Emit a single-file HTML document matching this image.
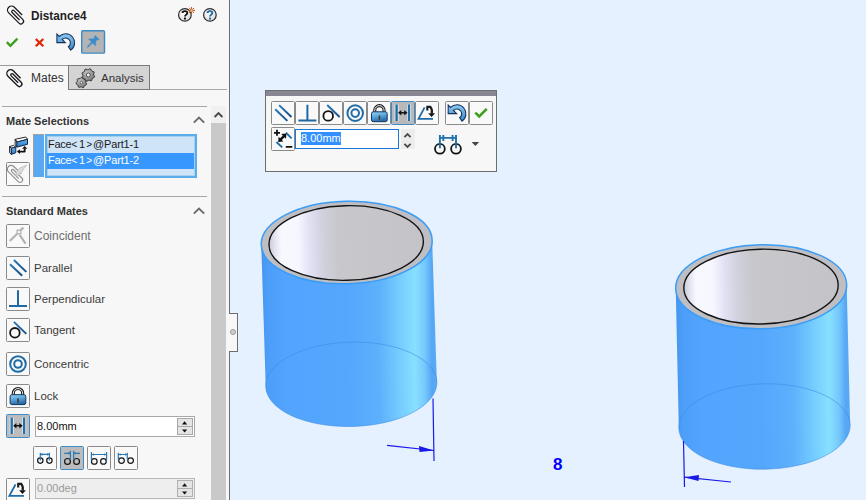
<!DOCTYPE html>
<html><head><meta charset="utf-8">
<style>
*{margin:0;padding:0;box-sizing:border-box}
html,body{width:866px;height:500px;overflow:hidden;background:#e5f1fe;font-family:"Liberation Sans",sans-serif}
.a{position:absolute}
#panel{position:absolute;left:0;top:0;width:229px;height:500px;background:#f7f7f7}
#pborder{position:absolute;left:229px;top:0;width:1px;height:500px;background:#6e6e6e}
.t{position:absolute;white-space:nowrap;font-size:12px;color:#3b3b3b;line-height:14px}
.hdr{font-weight:bold;font-size:11px;color:#333}
.btn{position:absolute;width:24px;height:24px;border:1px solid #8a8a8a;border-radius:1.5px;background:#f9f9f9}
.hr{position:absolute;height:1px;background:#a8a8a8}
svg{position:absolute;overflow:visible}
</style></head><body>

<!-- viewport scene -->
<svg class="a" style="left:0;top:0" width="866" height="500" viewBox="0 0 866 500">
<defs>
  <linearGradient id="body1" gradientUnits="userSpaceOnUse" x1="261.2" y1="0" x2="436.4" y2="0">
    <stop offset="0" stop-color="#4696ee"/>
    <stop offset="0.04" stop-color="#4c9ef8"/>
    <stop offset="0.15" stop-color="#52a4fd"/>
    <stop offset="0.5" stop-color="#54a7fd"/>
    <stop offset="0.67" stop-color="#5cb0fc"/>
    <stop offset="0.8" stop-color="#76cffe"/>
    <stop offset="0.88" stop-color="#88e0ff"/>
    <stop offset="0.935" stop-color="#74c8fc"/>
    <stop offset="0.975" stop-color="#55a6f5"/>
    <stop offset="1" stop-color="#5aaaf4"/>
  </linearGradient>
  <linearGradient id="body2" gradientUnits="userSpaceOnUse" x1="675.7" y1="0" x2="850.3" y2="0">
    <stop offset="0" stop-color="#4696ee"/>
    <stop offset="0.04" stop-color="#4c9ef8"/>
    <stop offset="0.15" stop-color="#52a4fd"/>
    <stop offset="0.5" stop-color="#54a7fd"/>
    <stop offset="0.67" stop-color="#5cb0fc"/>
    <stop offset="0.8" stop-color="#76cffe"/>
    <stop offset="0.88" stop-color="#88e0ff"/>
    <stop offset="0.935" stop-color="#74c8fc"/>
    <stop offset="0.975" stop-color="#55a6f5"/>
    <stop offset="1" stop-color="#5aaaf4"/>
  </linearGradient>
  <linearGradient id="inner1" gradientUnits="userSpaceOnUse" x1="269" y1="0" x2="423.4" y2="0">
    <stop offset="0" stop-color="#c8c8d6"/>
    <stop offset="0.04" stop-color="#e4e4f2"/>
    <stop offset="0.08" stop-color="#f8f8ff"/>
    <stop offset="0.19" stop-color="#f6f6ff"/>
    <stop offset="0.26" stop-color="#e2e2f6"/>
    <stop offset="0.34" stop-color="#d2d2e0"/>
    <stop offset="0.44" stop-color="#c8c8cc"/>
    <stop offset="1" stop-color="#c4c4c8"/>
  </linearGradient>
  <linearGradient id="inner2" gradientUnits="userSpaceOnUse" x1="683.8" y1="0" x2="838.2" y2="0">
    <stop offset="0" stop-color="#c8c8d6"/>
    <stop offset="0.04" stop-color="#e4e4f2"/>
    <stop offset="0.08" stop-color="#f8f8ff"/>
    <stop offset="0.19" stop-color="#f6f6ff"/>
    <stop offset="0.26" stop-color="#e2e2f6"/>
    <stop offset="0.34" stop-color="#d2d2e0"/>
    <stop offset="0.44" stop-color="#c8c8cc"/>
    <stop offset="1" stop-color="#c4c4c8"/>
  </linearGradient>
</defs>
<!-- cylinder 1 -->
<path d="M261.22,244.12 L265.72,385.92 L436.88,382.68 L432.18,240.88 Z" fill="url(#body1)"/>
<ellipse cx="351.30" cy="384.30" rx="85.60" ry="42.20" transform="rotate(-1.432 351.30 384.30)" fill="url(#body1)"/>
<ellipse cx="351.30" cy="384.30" rx="85.60" ry="42.20" transform="rotate(-1.432 351.30 384.30)" fill="none" stroke="#3a8ae4" stroke-width="0.8" opacity="0.7"/>
<ellipse cx="346.70" cy="242.50" rx="85.50" ry="41.30" transform="rotate(-1.427 346.70 242.50)" fill="#bfbfc3" stroke="#3a9cf6" stroke-width="1.5"/>
<ellipse cx="346.20" cy="243.00" rx="77.20" ry="37.30" transform="rotate(-1.427 346.20 243.00)" fill="url(#inner1)" stroke="#141414" stroke-width="1.4"/>
<!-- cylinder 2 -->
<path d="M675.72,288.14 L678.81,427.67 L850.19,425.33 L846.68,285.26 Z" fill="url(#body2)"/>
<ellipse cx="764.50" cy="426.50" rx="85.70" ry="42.70" transform="rotate(-1.031 764.50 426.50)" fill="url(#body2)"/>
<ellipse cx="764.50" cy="426.50" rx="85.70" ry="42.70" transform="rotate(-1.031 764.50 426.50)" fill="none" stroke="#3a8ae4" stroke-width="0.8" opacity="0.7"/>
<ellipse cx="761.20" cy="286.70" rx="85.50" ry="42.00" transform="rotate(-1.261 761.20 286.70)" fill="#bfbfc3" stroke="#3a9cf6" stroke-width="1.5"/>
<ellipse cx="761.00" cy="286.60" rx="77.20" ry="37.40" transform="rotate(-1.261 761.00 286.60)" fill="url(#inner2)" stroke="#141414" stroke-width="1.4"/>
<!-- dimensions -->
<g stroke="#1a1ae8" stroke-width="1.2" fill="#1a1ae8">
  <line x1="433" y1="398.5" x2="434" y2="461"/>
  <line x1="387" y1="445.3" x2="434" y2="450.5"/>
  <path d="M434,450.5 L419,446 L419.5,452 Z" stroke="none"/>
  <line x1="683.5" y1="441" x2="684.5" y2="487"/>
  <line x1="684" y1="477.2" x2="731" y2="482"/>
  <path d="M684,477.2 L699,475 L698.5,481 Z" stroke="none"/>
</g>
<text x="553" y="470" font-family="Liberation Sans" font-weight="bold" font-size="17" fill="#0000ff">8</text>
</svg>
<div id="panel">
  <!-- title -->
  <svg class="a" style="left:0;top:0" width="230" height="100" viewBox="0 0 230 100">
  <defs>
    <linearGradient id="undog" x1="0" y1="0" x2="0" y2="1">
      <stop offset="0" stop-color="#8ccaf4"/><stop offset="1" stop-color="#3c86c6"/>
    </linearGradient>
    <radialGradient id="helpg" cx="0.4" cy="0.35" r="0.7">
      <stop offset="0" stop-color="#ffffff"/><stop offset="1" stop-color="#d8d8d8"/>
    </radialGradient>
  </defs>
  <g transform="translate(16.2,14.7) rotate(-45) translate(0,-6.6)" fill="none" stroke="#1a1a1a" stroke-width="1.25">
    <path d="M4,11 L4,0 A4,4 0 0 0 -4,0 L-4,14.5 A2.675,2.675 0 0 0 1.35,14.5 L1.35,2.2 A1.35,1.35 0 0 0 -1.35,2.2 L-1.35,12.7"/>
  </g>
  <path id="ic-chk" d="M6.8,42.2 L10.4,45.8 L17.4,38.7" fill="none" stroke="#3ca01e" stroke-width="2.4"/>
  <path d="M35.8,39 L43.3,46.3 M43.3,39 L35.8,46.3" fill="none" stroke="#e02800" stroke-width="2.3"/>
  <path id="ic-undo" d="M56.9,34 L56.9,42.6 L65.3,42.6 L62.2,39.4 A4.8,4.8 0 1 1 68.35,46.73 L70.76,50.17 A9,9 0 1 0 59.24,36.44 Z" fill="url(#undog)" stroke="#14345e" stroke-width="1.1"/>
  <rect x="81.7" y="30.7" width="22.8" height="22.4" rx="1.2" fill="#b4b4b4" stroke="#3a8ac4" stroke-width="1.4"/>
  <path d="M95.22,35.42 L99.18,39.38 L98.19,40.37 L97.41,39.59 L95.86,41.15 L95.64,46.03 L92.67,43.06 L87.80,47.51 L87.09,46.80 L91.54,41.93 L88.57,38.96 L93.45,38.74 L95.01,37.19 L94.23,36.41 Z" fill="#3a8cc8" stroke="#3a8cc8" stroke-width="0.4" stroke-linejoin="round"/>
  <circle cx="184.9" cy="14.9" r="6.3" fill="url(#helpg)" stroke="#2e2e2e" stroke-width="1.2"/>
  <path d="M182.5,13 C182.5,11.6 183.5,11.1 184.9,11.1 C186.3,11.1 187.3,11.9 187.3,13 C187.3,14.5 185,14.8 185,16.6" fill="none" stroke="#111" stroke-width="1.8"/>
  <rect x="184" y="17.6" width="2" height="1.9" fill="#111"/>
  <g stroke="#b04a22" stroke-width="1"><path d="M191.6,7 V13.8 M188.2,10.4 H195 M189.2,8 L194,12.8 M194,8 L189.2,12.8"/></g>
  <circle cx="191.6" cy="10.4" r="1.5" fill="#f2a858"/>
  <circle cx="209.9" cy="14.9" r="6.3" fill="url(#helpg)" stroke="#2e2e2e" stroke-width="1.2"/>
  <path d="M207.5,13 C207.5,11.6 208.5,11.1 209.9,11.1 C211.3,11.1 212.3,11.9 212.3,13 C212.3,14.5 210,14.8 210,16.6" fill="none" stroke="#1e6aa6" stroke-width="1.8"/>
  <rect x="209" y="17.6" width="2" height="1.9" fill="#1e6aa6"/>
</svg>
  <div class="t" style="left:31px;top:9px;font-weight:bold;font-size:12.5px;color:#1e1e1e;transform:scaleX(0.94);transform-origin:0 0">Distance4</div>

  <!-- tabs -->
  <div class="a" style="left:0;top:65px;width:69px;height:25px;border-top:1px solid #9a9a9a;border-right:1px solid #7a7a7a;background:#f7f7f7"></div>
  <div class="a" style="left:68px;top:65px;width:82px;height:25px;border:1px solid #7a7a7a;background:#d4d4d4"></div>
  <div class="hr" style="left:150px;top:89px;width:77px"></div>
  <div class="t" style="left:31px;top:71px;color:#333">Mates</div>
  <div class="t" style="left:101px;top:71px;font-size:11.5px;color:#333">Analysis</div>
  <svg class="a" style="left:0;top:60px" width="160" height="34" viewBox="0 60 160 34">
    <defs><radialGradient id="gearg" cx="0.4" cy="0.35" r="0.8"><stop offset="0" stop-color="#c4c4c4"/><stop offset="1" stop-color="#6a6a6a"/></radialGradient></defs>
    <g transform="translate(15,77.9) scale(0.94) rotate(-45) translate(0,-6.6)" fill="none" stroke="#1a1a1a" stroke-width="1.45">
      <path d="M4,11 L4,0 A4,4 0 0 0 -4,0 L-4,14.5 A2.675,2.675 0 0 0 1.35,14.5 L1.35,2.2 A1.35,1.35 0 0 0 -1.35,2.2 L-1.35,12.7"/>
    </g>
    <path d="M86.59,83.65 L86.23,84.78 L84.91,85.26 L84.23,85.97 L83.82,87.32 L82.71,87.74 L81.51,87.00 L80.53,86.91 L79.22,87.43 L78.20,86.82 L78.03,85.43 L77.48,84.61 L76.26,83.91 L76.10,82.73 L77.09,81.73 L77.39,80.79 L77.18,79.40 L78.00,78.54 L79.39,78.68 L80.32,78.34 L81.27,77.30 L82.45,77.41 L83.21,78.59 L84.06,79.09 L85.46,79.20 L86.12,80.18 L85.66,81.52 L85.80,82.49 Z" fill="url(#gearg)" stroke="#2e2e2e" stroke-width="0.9"/>
    <circle cx="81.4" cy="82.6" r="1.3" fill="#f0f0f0" stroke="#333" stroke-width="0.7"/>
    <path d="M94.57,76.27 L94.20,77.47 L92.78,78.02 L92.10,78.83 L91.84,80.33 L90.73,80.92 L89.33,80.30 L88.28,80.40 L87.03,81.27 L85.83,80.90 L85.28,79.48 L84.47,78.80 L82.97,78.54 L82.38,77.43 L83.00,76.03 L82.90,74.98 L82.03,73.73 L82.40,72.53 L83.82,71.98 L84.50,71.17 L84.76,69.67 L85.87,69.08 L87.27,69.70 L88.32,69.60 L89.57,68.73 L90.77,69.10 L91.32,70.52 L92.13,71.20 L93.63,71.46 L94.22,72.57 L93.60,73.97 L93.70,75.02 Z" fill="url(#gearg)" stroke="#2e2e2e" stroke-width="0.9"/>
    <circle cx="88.3" cy="75" r="2" fill="#f0f0f0" stroke="#333" stroke-width="0.8"/>
  </svg>

  <!-- Mate selections -->
  <div class="hr" style="left:2px;top:106px;width:205px"></div>
  <div class="t hdr" style="left:6px;top:114px">Mate Selections</div>

  <div class="a" style="left:33px;top:134px;width:11px;height:43px;background:#5aa8f2;border-top:1px solid #a0a0a0;border-left:1px solid #a0a0a0"></div>
  <div class="a" style="left:45px;top:134px;width:152px;height:44px;border:2px solid #5aaee8;box-shadow:inset 0 0 0 1px #a6d0f2;background:#d0e4f8"></div>
  <div class="a" style="left:47px;top:153px;width:147px;height:16px;background:#3797fc"></div>
  <div class="t" style="left:0;top:137px;font-size:11px;color:#1a1a1a"><span class="a" style="left:48px;letter-spacing:-0.3px">Face</span><span class="a" style="left:71.4px;top:0.5px;font-size:10px">&lt;</span><span class="a" style="left:79px">1</span><span class="a" style="left:86.3px;top:0.5px;font-size:10px">&gt;</span><span class="a" style="left:93px;letter-spacing:-0.15px">@Part1-1</span></div>
  <div class="t" style="left:0;top:153px;font-size:11px;color:#fff"><span class="a" style="left:48px;letter-spacing:-0.3px">Face</span><span class="a" style="left:71.4px;top:0.5px;font-size:10px">&lt;</span><span class="a" style="left:79px">1</span><span class="a" style="left:86.3px;top:0.5px;font-size:10px">&gt;</span><span class="a" style="left:93px;letter-spacing:-0.15px">@Part1-2</span></div>

  <div class="btn" style="left:6px;top:162px"></div>
  <!-- Standard mates -->
  <div class="hr" style="left:2px;top:196px;width:205px"></div>
  <div class="t hdr" style="left:6px;top:204px">Standard Mates</div>

  <div class="btn" style="left:6px;top:224px"></div>
  <div class="t" style="left:34px;top:229px;color:#6e6e6e">Coincident</div>
  <div class="btn" style="left:6px;top:256px"></div>
  <div class="t" style="left:34px;top:261px;font-size:11.5px">Parallel</div>
  <div class="btn" style="left:6px;top:287px"></div>
  <div class="t" style="left:34px;top:292px;font-size:11.5px">Perpendicular</div>
  <div class="btn" style="left:6px;top:318px"></div>
  <div class="t" style="left:34px;top:323px;font-size:11.5px">Tangent</div>
  <div class="btn" style="left:6px;top:352px"></div>
  <div class="t" style="left:34px;top:357px;font-size:11.5px">Concentric</div>
  <div class="btn" style="left:6px;top:384px"></div>
  <div class="t" style="left:34px;top:389px;font-size:11.5px">Lock</div>
  <div class="btn" style="left:6px;top:414px;background:#bcbcbc;border:1.5px solid #3d8cc8"></div>

  <div class="a" style="left:35px;top:416px;width:160px;height:21px;border:1px solid #a8a8a8;background:#fff"></div>
  <div class="t" style="left:37px;top:419px;font-size:11px;color:#111">8.00mm</div>
  <div class="a" style="left:177px;top:418px;width:16px;height:9px;border:1px solid #a8a8a8;background:#e4e4e4"></div><div class="a" style="left:177px;top:426px;width:16px;height:9px;border:1px solid #a8a8a8;background:#e4e4e4"></div>

  <div class="btn" style="left:33px;top:446px;width:24px;height:24px"></div>
  <div class="btn" style="left:60px;top:446px;width:24px;height:24px;background:#bcbcbc;border:1.5px solid #3d8cc8"></div>
  <div class="btn" style="left:87px;top:446px;width:24px;height:24px"></div>
  <div class="btn" style="left:114px;top:446px;width:24px;height:24px"></div>

  <div class="btn" style="left:6px;top:478px"></div>
  <div class="a" style="left:35px;top:478px;width:160px;height:21px;border:1px solid #b8b8b8;background:#eeeeee"></div>
  <div class="t" style="left:37px;top:481px;font-size:11px;color:#9a9a9a">0.00deg</div>
  <div class="a" style="left:177px;top:480px;width:16px;height:9px;border:1px solid #b0b0b0;background:#e4e4e4"></div><div class="a" style="left:177px;top:488px;width:16px;height:9px;border:1px solid #b0b0b0;background:#e4e4e4"></div>

  <!-- scrollbar -->
  <div class="a" style="left:211px;top:106px;width:15px;height:17px;background:#f0f0f0"></div>
  <div class="a" style="left:211px;top:123px;width:15px;height:377px;background:#c9c9c9"></div>

  <svg class="a" style="left:0;top:120px" width="230" height="380" viewBox="0 120 230 380">
    <defs>
      <linearGradient id="blueln" x1="0" y1="0" x2="1" y2="1"><stop offset="0" stop-color="#2a7ab8"/><stop offset="1" stop-color="#1a4e86"/></linearGradient>
      <linearGradient id="lockg" x1="0" y1="0" x2="0.3" y2="1"><stop offset="0" stop-color="#9ad4f4"/><stop offset="0.5" stop-color="#5aa6dc"/><stop offset="1" stop-color="#2a6aa8"/></linearGradient>
      <linearGradient id="boxg" x1="0" y1="0" x2="0" y2="1"><stop offset="0" stop-color="#6ab6ec"/><stop offset="1" stop-color="#2a78c0"/></linearGradient>
    </defs>
    <!-- swap icon -->
    <g stroke-linejoin="round">
      <path d="M15.2,139.3 L25.8,137 L27.5,139.3 L16.9,142.1 Z" fill="#fff" stroke="#111" stroke-width="0.9"/>
      <path d="M15.2,139.3 L16.9,142.1 L16.9,147.1 L15.2,144.9 Z" fill="#fff" stroke="#111" stroke-width="0.9"/>
      <path d="M16.9,142.1 L27.5,139.3 L27.5,144.3 L16.9,147.1 Z" fill="url(#boxg)" stroke="#0d2a50" stroke-width="1"/>
      <path d="M9.6,146.6 L13.5,145.4 L15.8,147.1 L11.3,148.2 Z" fill="#fff" stroke="#111" stroke-width="0.9"/>
      <path d="M9.6,146.6 L11.3,148.2 L11.3,154.4 L9.6,152.7 Z" fill="#fff" stroke="#111" stroke-width="0.9"/>
      <path d="M11.3,148.2 L15.8,147.1 L15.8,152.7 L11.3,154.4 Z" fill="url(#boxg)" stroke="#0d2a50" stroke-width="1"/>
      <path d="M19.2,151.6 L24.7,151.6 L24.7,148.4" fill="none" stroke="#111" stroke-width="1.8"/>
      <path d="M16.9,151.6 L19.9,149.3 L19.9,154 Z M24.7,145.9 L22.1,148.8 L27.3,148.8 Z" fill="#111"/>
    </g>
    <!-- disabled mate icon -->
    <g transform="translate(15.6,173.6) scale(0.95) rotate(-45) translate(0,-6.6)" fill="none" stroke="#8e8e8e" stroke-width="1.2">
      <path d="M4,11 L4,0 A4,4 0 0 0 -4,0 L-4,14.5 A2.675,2.675 0 0 0 1.35,14.5 L1.35,2.2 A1.35,1.35 0 0 0 -1.35,2.2 L-1.35,12.7"/>
    </g>
    <path d="M26.6,165.2 L19.8,168 L16.5,172 L15.6,175.8 L18.6,174.6 L21.6,172.2 L24,168.4 Z" fill="#dcdcdc" stroke="#b8b8b8" stroke-width="0.7"/>
    <!-- coincident -->
    <g stroke="#b2b2b2" stroke-width="2.2" fill="none">
      <path d="M9.8,241 L17.2,233.8 M20.6,230.2 L23.4,227.6 M19.6,234.8 L25.6,243.6"/>
      <rect x="17.2" y="230.2" width="3.6" height="3.6" stroke-width="1.3"/>
    </g>
    <!-- parallel -->
    <g id="ic-par" stroke="url(#blueln)" stroke-width="2" fill="none">
      <path d="M10,264.2 L22.2,275.8"/><path d="M13.9,260 L26.3,271.9"/>
    </g>
    <path id="ic-perp" d="M18,290.3 V305.8 M9,306 H27" stroke="#1e68a4" stroke-width="2" fill="none"/>
    <!-- tangent -->
<g id="ic-tan">    <path d="M13.9,321.9 L26.3,333.9" stroke="url(#blueln)" stroke-width="2" fill="none"/>
    <circle cx="14.9" cy="332.8" r="4.8" fill="none" stroke="#151515" stroke-width="1.8"/></g>
    <!-- concentric -->
<g id="ic-conc">    <circle cx="18" cy="364" r="7.8" fill="none" stroke="#1f6ca6" stroke-width="2"/>
    <circle cx="18" cy="364" r="3.8" fill="none" stroke="#1f6ca6" stroke-width="2"/></g>
<g id="ic-lock">    <!-- lock -->
    <path d="M13.35,395.5 V393.2 A4.65,4.65 0 0 1 22.65,393.2 V395.5" fill="none" stroke="#1c1c1c" stroke-width="3.1"/>
    <path d="M13.35,395.5 V393.2 A4.65,4.65 0 0 1 22.65,393.2 V395.5" fill="none" stroke="#f4f4f4" stroke-width="1"/>
    <rect x="10.1" y="394.7" width="15.7" height="9.9" rx="1.8" fill="url(#lockg)" stroke="#0f3660" stroke-width="1"/>
    <rect x="17.3" y="398.4" width="1.5" height="4.2" fill="#4a3020"/>
</g><g id="ic-dist">    <!-- distance -->
    <path d="M11.7,417.5 V434 M24.1,417.5 V434" stroke="#f0f0f0" stroke-width="4"/>
    <path d="M11.7,417.5 V434 M24.1,417.5 V434" stroke="#2070aa" stroke-width="2.4"/>
    <path d="M15,425.7 H20.8" stroke="#111" stroke-width="1.5"/>
    <path d="M13.2,425.7 L16.4,423 L16.4,428.4 Z M22.6,425.7 L19.4,423 L19.4,428.4 Z" fill="#111"/>
</g>    <!-- align buttons -->
    <g fill="none" stroke="#151515" stroke-width="1.2">
      <circle cx="40.3" cy="460.6" r="2.7"/><circle cx="49.4" cy="460.6" r="2.7"/>
      <circle cx="67.5" cy="461.4" r="2.9"/><circle cx="76.6" cy="461.4" r="2.9"/>
      <circle cx="94.3" cy="461.4" r="2.8"/><circle cx="103.4" cy="461.4" r="2.8"/>
      <circle cx="121.5" cy="460.6" r="2.8"/><circle cx="130.6" cy="460.6" r="2.8"/>
    </g>
    <g fill="none" stroke="#2a78b4" stroke-width="1.2">
      <path d="M40.3,452.8 V460.6 M49.4,452.8 V460.6 M40.3,454.4 H49.4"/>
      <path d="M70.4,450.8 V459.8 M73.7,450.8 V459.8 M64.2,453.3 H70.4 M73.7,453.3 H80"/>
      <path d="M91.4,452 V460.4 M106.6,452 V460.4 M91.4,454.5 H106.6"/>
      <path d="M118.3,452.8 V459.4 M127.3,452.8 V459.4 M118.3,454.5 H127.3"/>
    </g>
    <g fill="#2a78b4">
      <path d="M40.3,454.4 L42.6,453.1 V455.7 Z M49.4,454.4 L47.1,453.1 V455.7 Z"/>
      <path d="M70.4,453.3 L68.1,452 V454.6 Z M73.7,453.3 L76,452 V454.6 Z"/>
      <path d="M91.4,454.5 L93.7,453.2 V455.8 Z M106.6,454.5 L104.3,453.2 V455.8 Z"/>
      <path d="M118.3,454.5 L120.6,453.2 V455.8 Z M127.3,454.5 L125,453.2 V455.8 Z"/>
    </g>
<g id="ic-ang">    <!-- angle -->
    <path d="M15.5,484.3 L9.4,495.8 H23.9" fill="none" stroke="#1f6ca6" stroke-width="1.8"/>
    <path d="M17.2,483.9 H22.2 M18.2,483.4 V487.4 M21.4,484.2 Q23.6,486.6 22.6,490.6" fill="none" stroke="#1a1a1a" stroke-width="2.1"/><path d="M19.1,490.2 L25.9,490.2 L22.5,494 Z" fill="#111"/>
</g>    <!-- spinner arrows -->
    <path d="M182,424.4 L184.6,421.2 L187.2,424.4 Z M182,429.4 L187.2,429.4 L184.6,432.4 Z" fill="#111"/>
    <path d="M182,486.4 L184.6,483.2 L187.2,486.4 Z M182,491.4 L187.2,491.4 L184.6,494.4 Z" fill="#111"/>
    <!-- section chevrons -->
    <path d="M193.8,122.6 L199,117.6 L204.2,122.6" fill="none" stroke="#6a6a6a" stroke-width="1.9"/>
    <path d="M193.8,213.6 L199,208.6 L204.2,213.6" fill="none" stroke="#6a6a6a" stroke-width="1.9"/>
    <path d="M214.6,117 L218.5,113.1 L222.4,117" fill="none" stroke="#4a4a4a" stroke-width="2"/>
  </svg>
</div>
<div id="pborder"></div>
<!-- splitter handle -->
<div class="a" style="left:229px;top:313px;width:9px;height:39px;background:#f7f7f7;border:1px solid #6e6e6e;border-left:none"></div>
<div class="a" style="left:230px;top:329px;width:6px;height:6px;border-radius:50%;background:#d0d0d0;border:1px solid #9a9a9a"></div>

<!-- popup toolbar -->
<div class="a" style="left:265px;top:90px;width:232px;height:82px;border:1px solid #6e6e6e;background:#f7f7f7"></div>
<div class="a" style="left:265px;top:90px;width:232px;height:6px;background:#878793;border:1px solid #6e6e6e;border-bottom:none"></div>
<div class="btn" style="left:271px;top:101px;width:24px;height:24px"></div>
<div class="btn" style="left:295px;top:101px;width:24px;height:24px"></div>
<div class="btn" style="left:319px;top:101px;width:24px;height:24px"></div>
<div class="btn" style="left:343px;top:101px;width:24px;height:24px"></div>
<div class="btn" style="left:367px;top:101px;width:24px;height:24px"></div>
<div class="btn" style="left:391px;top:101px;width:24px;height:24px;background:#b9b9b9;border:1.5px solid #3d8cc8"></div>
<div class="btn" style="left:415px;top:101px;width:24px;height:24px"></div>
<div class="btn" style="left:445px;top:101px;width:24px;height:24px"></div>
<div class="btn" style="left:469px;top:101px;width:24px;height:24px"></div>
<div class="btn" style="left:271px;top:127px;width:24px;height:24px"></div>
<div class="a" style="left:295px;top:129px;width:104px;height:20px;border:1.5px solid #1a78d8;background:#fff"></div>
<div class="a" style="left:301px;top:132px;width:40px;height:13px;background:#3391ff"></div>
<div class="t" style="left:301px;top:131px;font-size:11px;color:#fff">8.00mm</div>
<div class="a" style="left:401px;top:129px;width:14px;height:20px;background:#ececec"></div>
<svg class="a" style="left:0;top:0" width="866" height="500" viewBox="0 0 866 500">
  <use href="#ic-par" x="265.2" y="-154.9"/>
  <use href="#ic-perp" x="289.4" y="-185.6"/>
  <use href="#ic-tan" x="313.3" y="-216.9"/>
  <use href="#ic-conc" x="337.2" y="-250.9"/>
  <use href="#ic-lock" x="361.4" y="-282.9"/>
  <use href="#ic-dist" x="384.9" y="-312.9"/>
  <use href="#ic-ang" x="409.1" y="-377"/>
  <use href="#ic-undo" x="391.3" y="71"/>
  <g transform="translate(475.3,112.6) scale(1.08) translate(-6.8,-42.2)"><use href="#ic-chk"/></g>
  <!-- add/subtract icon -->
  <path d="M274,132.8 H280 M277,129.8 V135.8 M285.8,146.8 H292.3" stroke="#111" stroke-width="1.8"/>
  <path d="M285.9,132.6 L291.6,138.3 M276.4,142 L282.2,147.4" stroke="#1f6ca6" stroke-width="1.9"/>
  <path d="M280.2,139.8 L284.2,135.8" stroke="#111" stroke-width="2.4"/>
  <path d="M278.2,142 L278.6,136.8 L283.4,141.6 Z M286.4,133.6 L281.2,134 L286,138.8 Z" fill="#111"/>
  <!-- spinner chevrons -->
  <path d="M404.4,137.2 L407.5,134 L410.6,137.2 M404.4,143.8 L407.5,147 L410.6,143.8" fill="none" stroke="#4a4a4a" stroke-width="1.8"/>
  <!-- flip icon -->
  <circle cx="439.9" cy="148.8" r="4.9" fill="none" stroke="#151515" stroke-width="1.8"/>
  <circle cx="456" cy="148.8" r="4.9" fill="none" stroke="#151515" stroke-width="1.8"/>
  <path d="M439.9,135 V148.2 M456,135 V148.2 M439.9,137.9 H456 M443.3,135 V141 M452.6,135 V141" fill="none" stroke="#2070aa" stroke-width="1.9"/>
  <path d="M471.6,141.9 H479.1 L475.4,145.9 Z" fill="#444"/>
</svg>
</body></html>
